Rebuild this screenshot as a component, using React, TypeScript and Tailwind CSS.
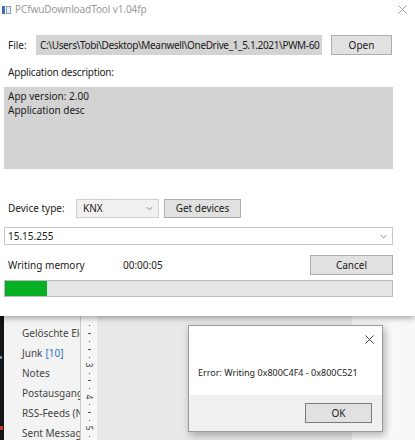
import React from "react";

const font = { fontFamily: '"Noto Sans", "Open Sans", sans-serif' };

const Chevron = () => (
  <svg width="7" height="5" viewBox="0 0 8 5" className="text-[#707070]">
    <path d="M1 1 L4 4 L7 1" fill="none" stroke="currentColor" strokeWidth="1" />
  </svg>
);

const CloseX = ({ size = 10, color = "#333" }: { size?: number; color?: string }) => (
  <svg width={size} height={size} viewBox="0 0 10 10">
    <path d="M0.5 0.5 L9.5 9.5 M9.5 0.5 L0.5 9.5" stroke={color} strokeWidth="1" />
  </svg>
);

const WinButton = ({ children, className = "" }: { children: React.ReactNode; className?: string }) => (
  <div
    className={
      "flex items-center justify-center bg-[#e1e1e1] border border-[#adadad] text-[10px] text-[#1a1a1a] " +
      className
    }
  >
    {children}
  </div>
);

const folders = [
  { name: "Gelöschte Elemente" },
  { name: "Junk", count: "[10]" },
  { name: "Notes" },
  { name: "Postausgang" },
  { name: "RSS-Feeds (Nur dieser Computer)" },
  { name: "Sent Messages" },
];

const rulerMarks = ["·", "-", "·", "-", "·", "3", "·", "-", "·", "4", "·", "-", "·", "5", "·"];

const MainWindow = () => (
  <div className="relative z-10 h-[316px] bg-white shadow-[0_2px_6px_rgba(0,0,0,0.35)]">
    {/* title bar */}
    <div className="flex h-[19px] items-center">
      <div className="ml-[2px] flex h-[8px] w-[9px] items-center gap-[1px]">
        <div className="h-[8px] w-[3px] bg-[#3b6fb0]" />
        <div className="h-[8px] w-[5px] border border-[#8aa2c2] bg-[#e8eef6]" />
      </div>
      <span className="ml-[4px] text-[10px] tracking-[-0.1px] text-[#9a9a9a]">PCfwuDownloadTool v1.04fp</span>
      <div className="ml-auto mr-[8px]">
        <CloseX size={9} color="#999" />
      </div>
    </div>

    {/* file row */}
    <div className="mt-[16px] flex h-[20px] items-center">
      <span className="ml-[8px] w-[28px] text-[10px] text-[#1a1a1a]">File:</span>
      <div className="flex h-[20px] w-[286px] items-center overflow-hidden whitespace-nowrap bg-[#d3d3d3] pl-[4px] text-[10px] tracking-[-0.35px] text-[#1a1a1a]">
        C:\Users\Tobi\Desktop\Meanwell\OneDrive_1_5.1.2021\PWM-60
      </div>
      <WinButton className="ml-[9px] h-[20px] w-[61px]">Open</WinButton>
    </div>

    <div className="mt-[10px] ml-[8px] text-[10px] tracking-[-0.2px] text-[#1a1a1a]">Application description:</div>

    <div className="mt-[7px] ml-[4px] h-[82px] w-[389px] bg-[#d3d3d3] px-[4px] pt-[2px] text-[10px] leading-[14px] text-[#1a1a1a]">
      <div>App version: 2.00</div>
      <div>Application desc</div>
    </div>

    {/* device row */}
    <div className="mt-[30px] flex h-[19px] items-center">
      <span className="ml-[8px] w-[68px] text-[10px] text-[#1a1a1a]">Device type:</span>
      <div className="flex h-[19px] w-[83px] items-center justify-between border border-[#cfcfcf] bg-[#f0f0f0] pl-[6px] pr-[5px] text-[10px] text-[#1a1a1a]">
        <span>KNX</span>
        <Chevron />
      </div>
      <WinButton className="ml-[5px] h-[19px] w-[77px]">Get devices</WinButton>
    </div>

    <div className="mt-[9px] ml-[4px] flex h-[18px] w-[389px] items-center justify-between border border-[#c6c6c6] bg-white px-[3px] text-[10px] text-[#1a1a1a]">
      <span>15.15.255</span>
      <span className="mr-[2px]">
        <Chevron />
      </span>
    </div>

    {/* status row */}
    <div className="mt-[10px] flex h-[20px] items-center">
      <span className="ml-[8px] w-[115px] text-[10px] text-[#1a1a1a]">Writing memory</span>
      <span className="text-[10px] text-[#1a1a1a]">00:00:05</span>
      <WinButton className="ml-auto mr-[22px] h-[20px] w-[83px]">Cancel</WinButton>
    </div>

    <div className="mt-[5px] ml-[4px] h-[17px] w-[389px] border border-[#bcbcbc] bg-[#e6e6e6]">
      <div className="h-full w-[42px] bg-[#06b025]" />
    </div>
  </div>
);

const Ruler = () => (
  <div className="flex w-[17px] flex-col items-center border-l border-[#c8c8c8] bg-[#f7f7f7] pt-[6px]">
    {rulerMarks.map((t, i) => (
      <div key={i} className="flex h-[8px] items-center justify-center">
        {t === "·" && <div className="h-[1px] w-[1px] bg-[#555]" />}
        {t === "-" && <div className="h-[1px] w-[3px] bg-[#555]" />}
        {/\d/.test(t) && (
          <span className="rotate-90 text-[8px] leading-[8px] text-[#333]">{t}</span>
        )}
      </div>
    ))}
  </div>
);

const OutlookArea = () => (
  <div className="flex h-[124px] overflow-hidden">
    <div className="relative w-[4px] bg-[#141414]">
      <div className="absolute left-0 top-[40px] h-[3px] w-[2px] bg-[#6b8fb3]" />
      <div className="absolute left-0 top-[110px] h-[4px] w-[3px] bg-[#c0392b]" />
    </div>
    <div className="w-[76px] overflow-hidden bg-[#f3f3f3] pl-[18px] pt-[7px] text-[10px] text-[#444]">
      {folders.map((f) => (
        <div key={f.name} className="flex h-[20px] items-center whitespace-nowrap">
          {f.name}
          {f.count && <span className="ml-[3px] text-[#2b79c2]">{f.count}</span>}
        </div>
      ))}
    </div>
    <Ruler />
    <div className="w-[255px] bg-[#e8e8e8]" />
    <div className="flex-1 bg-[#f8f8f8]" />
  </div>
);

const ErrorDialog = () => (
  <div className="absolute left-[188px] top-[325px] z-20 flex h-[107px] w-[195px] flex-col border border-[#9a9a9a] shadow-[2px_3px_8px_rgba(0,0,0,0.3)]">
    <div className="relative flex-1 bg-white">
      <div className="absolute right-[8px] top-[9px]">
        <CloseX size={9} />
      </div>
      <div className="absolute left-[9px] top-[40px] whitespace-nowrap text-[9px] text-[#1a1a1a]">
        Error: Writing 0x800C4F4 - 0x800C521
      </div>
    </div>
    <div className="flex h-[36px] items-center justify-end bg-[#f0f0f0] pr-[10px]">
      <div className="flex h-[20px] w-[67px] items-center justify-center border border-[#7a7a7a] bg-[#e1e1e1] text-[10px] text-[#1a1a1a]">
        OK
      </div>
    </div>
  </div>
);

export default function App() {
  return (
    <div className="relative h-[440px] w-[415px] overflow-hidden bg-[#f8f8f8]" style={font}>
      <MainWindow />
      <OutlookArea />
      <ErrorDialog />
    </div>
  );
}
